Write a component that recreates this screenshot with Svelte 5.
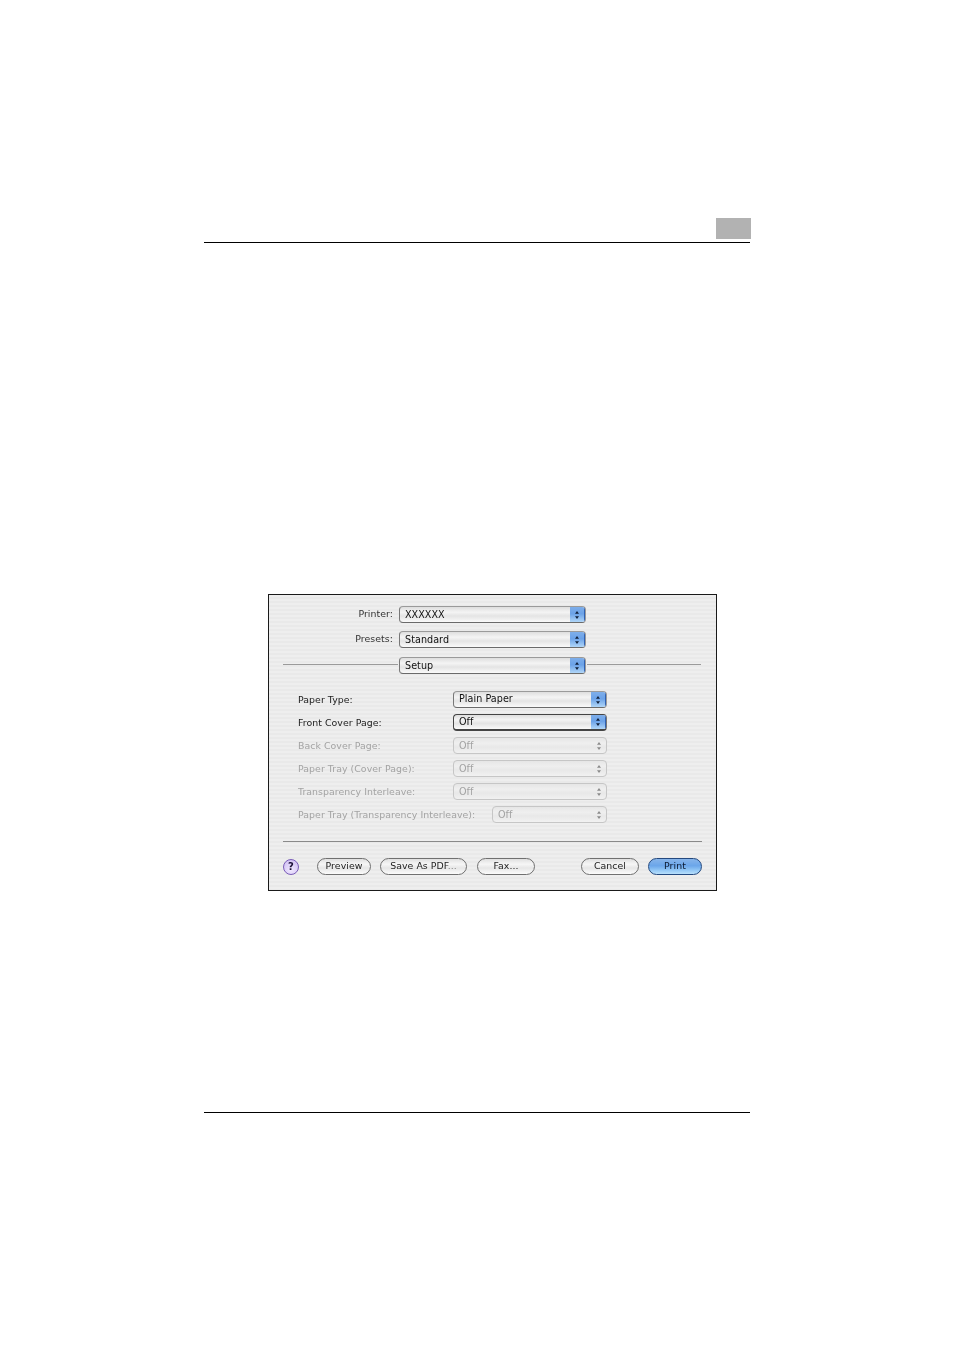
<script>
  const options = [
    { label: 'Paper Type:', value: 'Plain Paper' },
    { label: 'Front Cover Page:', value: 'Off', focus: true },
    { label: 'Back Cover Page:', value: 'Off', off: true },
    { label: 'Paper Tray (Cover Page):', value: 'Off', off: true },
    { label: 'Transparency Interleave:', value: 'Off', off: true },
    { label: 'Paper Tray (Transparency Interleave):', value: 'Off', off: true, short: true }
  ];
</script>

{#snippet popup(value, cls = '')}
  <div class="popup {cls}">
    <span class="popup__value">{value}</span>
    <span class="popup__arrows">
      <svg width="6" height="10" viewBox="0 0 6 10">
        <path d="M3 1 L5 3.8 H1 Z M3 9 L5 6.2 H1 Z" />
      </svg>
    </span>
  </div>
{/snippet}

<div class="page">
  <header class="head">
    <div class="head__tab"></div>
  </header>

  <section class="dialog">
    <div class="top">
      <div class="top__row">
        <span class="top__label">Printer:</span>
        {@render popup('XXXXXX', 'popup--top')}
      </div>
      <div class="top__row">
        <span class="top__label">Presets:</span>
        {@render popup('Standard', 'popup--top')}
      </div>
      <div class="top__row top__row--setup">
        <span class="line line--left"></span>
        {@render popup('Setup', 'popup--top')}
        <span class="line"></span>
      </div>
    </div>

    <div class="form">
      {#each options as o}
        <div class="form__row" class:off={o.off}>
          <span class="form__label">{o.label}</span>
          {@render popup(o.value, `${o.focus ? 'popup--focus' : ''} ${o.off ? 'popup--off' : ''} ${o.short ? 'popup--short' : ''}`)}
        </div>
      {/each}
    </div>

    <div class="sep"></div>

    <div class="actions">
      <span class="help">?</span>
      <button class="btn btn--preview">Preview</button>
      <button class="btn btn--save">Save As PDF<span class="dots">...</span></button>
      <button class="btn btn--fax">Fax...</button>
      <button class="btn btn--cancel">Cancel</button>
      <button class="btn btn--print">Print</button>
    </div>
  </section>

  <footer class="foot"></footer>
</div>

<style>
  :global(body) {
    background: #fff;
  }

  .page {
    width: 954px;
    height: 1350px;
    box-sizing: border-box;
    padding: 218px 204px 0;
    font-family: "DejaVu Sans", sans-serif;
    overflow: hidden;
  }

  .head {
    display: flex;
    justify-content: flex-end;
    width: 546px;
    height: 24px;
    border-bottom: 1px solid #000;
  }

  .head__tab {
    width: 35px;
    height: 21px;
    margin-right: -1px;
    background: #b2b2b2;
  }

  .dialog {
    width: 449px;
    height: 297px;
    box-sizing: border-box;
    margin: 351px 0 0 64px;
    padding: 11px 14px 0;
    border: 1px solid #1a1a1a;
    background: repeating-linear-gradient(#eeeeee 0 2px, #e9e9e9 2px 4px);
    font-size: 9.4px;
    letter-spacing: 0.05px;
    color: #1c1c1c;
    filter: blur(0.35px);
  }

  .top__row {
    display: flex;
    align-items: center;
    height: 17px;
    margin-bottom: 8px;
  }

  .top__row--setup {
    margin-top: 9px;
    margin-bottom: 0;
  }

  .top__label {
    width: 110px;
    margin-right: 6px;
    padding-bottom: 2px;
    text-align: right;
    color: #333;
  }

  .line {
    flex: 1;
    height: 1px;
    margin: 0 1px 2px 1px;
    background: #9a9a9a;
  }

  .line--left {
    flex: none;
    width: 115px;
    margin: 0 1px 2px 0;
  }

  .form {
    margin-top: 17px;
    padding-left: 15px;
  }

  .form__row {
    display: flex;
    align-items: center;
    height: 17px;
    margin-bottom: 6px;
  }

  .form__row .popup__value {
    line-height: 13px;
  }

  .form__row .popup--off .popup__value {
    line-height: 15px;
  }

  .form__label {
    width: 155px;
    flex: none;
    white-space: nowrap;
  }

  .off .form__label {
    color: #a3a3a3;
  }

  .popup {
    display: flex;
    align-items: stretch;
    box-sizing: border-box;
    width: 154px;
    height: 17px;
    border: 1px solid #9a9a9a;
    border-bottom-color: #6a6a6a;
    border-left-color: #777;
    border-radius: 4px;
    overflow: hidden;
    background: linear-gradient(#dedede, #f4f4f4 35%, #e4e4e4 60%, #fafafa);
  }

  .popup--top {
    width: 187px;
    flex: none;
  }

  .popup--focus {
    border-color: #444;
    border-right-color: #777;
    border-width: 1px 1px 2px;
  }

  .popup--off {
    border-color: #c6c6c6;
    background: linear-gradient(#e6e6e6, #efefef 35%, #e8e8e8 60%, #f1f1f1);
  }

  .popup--short {
    width: 115px;
    margin-left: 39px;
  }

  .popup__value {
    flex: 1;
    padding-left: 5px;
    font-size: 9.6px;
    line-height: 15px;
    color: #111;
  }

  .popup--off .popup__value {
    color: #a3a3a3;
  }

  .popup__arrows {
    display: flex;
    align-items: center;
    justify-content: center;
    width: 14px;
    border-right: 1px solid #2f62b4;
    background: linear-gradient(#7eaeea, #6ba2e8 45%, #b0d6f8);
  }

  .popup__arrows svg {
    fill: #10203a;
  }

  .popup--off .popup__arrows {
    background: none;
    border-right: none;
  }

  .popup--off .popup__arrows svg {
    fill: #8a8a8a;
  }

  .sep {
    height: 1px;
    margin-top: 18px;
    background: #8a8a8a;
    width: 419px;
  }

  .actions {
    display: flex;
    align-items: center;
    height: 17px;
    margin-top: 16px;
  }

  .help {
    display: flex;
    align-items: center;
    justify-content: center;
    width: 16px;
    height: 16px;
    box-sizing: border-box;
    flex: none;
    margin-right: 18px;
    border: 1px solid #7a5cb8;
    border-radius: 50%;
    background: radial-gradient(circle at 50% 70%, #f0e8ff, #cbb9f0);
    font-size: 10px;
    font-weight: bold;
    color: #1c1036;
  }

  .btn {
    height: 17px;
    box-sizing: border-box;
    flex: none;
    padding: 0 0 2px;
    border: 1px solid #707070;
    border-radius: 9px;
    background: linear-gradient(#e0e0e0, #f6f6f6 35%, #e6e6e6 60%, #fbfbfb);
    font: inherit;
    letter-spacing: inherit;
    color: #222;
  }

  .dots {
    color: #888;
  }

  .btn--preview { width: 54px; margin-right: 9px; }
  .btn--save { width: 87px; margin-right: 10px; }
  .btn--fax { width: 58px; margin-right: 46px; }
  .btn--cancel { width: 58px; margin-right: 9px; }

  .btn--print {
    width: 54px;
    border-color: #24497f;
    background: linear-gradient(#86b4ea, #6ba6ea 45%, #8cc2f4 70%, #b8e0fc);
    color: #0c1a30;
    font-weight: 500;
  }

  .foot {
    width: 546px;
    height: 1px;
    margin-top: 221px;
    background: #000;
  }
</style>
